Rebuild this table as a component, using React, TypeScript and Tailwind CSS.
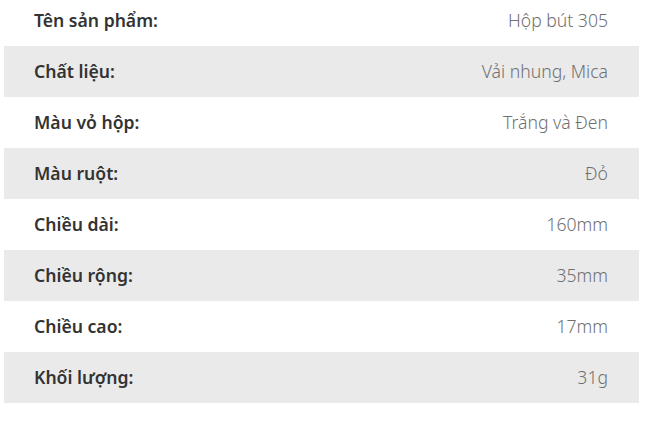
import React from "react";

const rows: [string, string][] = [
  ["Tên sản phẩm:", "Hộp bút 305"],
  ["Chất liệu:", "Vải nhung, Mica"],
  ["Màu vỏ hộp:", "Trắng và Đen"],
  ["Màu ruột:", "Đỏ"],
  ["Chiều dài:", "160mm"],
  ["Chiều rộng:", "35mm"],
  ["Chiều cao:", "17mm"],
  ["Khối lượng:", "31g"],
];

export default function App() {
  return (
    <div className="w-[646px] h-[425px] bg-white overflow-hidden" style={{ fontFamily: '"Noto Sans", sans-serif' }}>
      <div className="ml-[4px] w-[635px] -mt-[5px] flex flex-col">
        {rows.map(([k, v], i) => (
          <div
            key={k}
            className={`h-[51px] flex items-center justify-between pl-[30px] pr-[31px] ${i % 2 === 1 ? "bg-[#eaeaea]" : "bg-white"}`}
          >
            <span className="text-[17.6px] font-semibold text-[#333333]">{k}</span>
            <span className="text-[17.6px] font-light text-[#707070]">{v}</span>
          </div>
        ))}
      </div>
    </div>
  );
}
